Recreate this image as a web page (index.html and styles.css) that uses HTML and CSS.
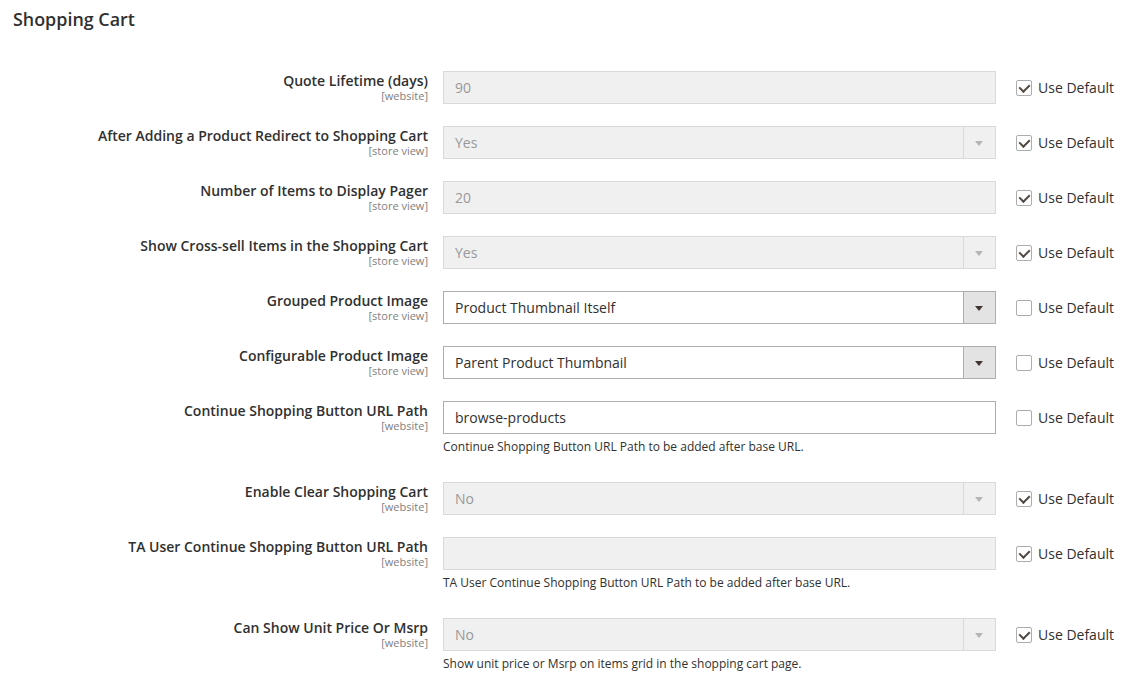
FILE: index.html
```html
<!DOCTYPE html>
<html>
<head>
<meta charset="utf-8">
<link rel="stylesheet" href="styles.css">
</head>
<body>
<div class="section">
  <h2 class="section-title">Shopping Cart</h2>
  <div class="fields">

    <div class="row">
      <div class="label"><span class="name">Quote Lifetime (days)</span><span class="scope">[website]</span></div>
      <div class="control"><div class="input disabled">90</div></div>
      <label class="default"><span class="cb checked"></span>Use Default</label>
    </div>

    <div class="row">
      <div class="label"><span class="name">After Adding a Product Redirect to Shopping Cart</span><span class="scope">[store view]</span></div>
      <div class="control"><div class="input select disabled"><span class="val">Yes</span><span class="arrow"></span></div></div>
      <label class="default"><span class="cb checked"></span>Use Default</label>
    </div>

    <div class="row">
      <div class="label"><span class="name">Number of Items to Display Pager</span><span class="scope">[store view]</span></div>
      <div class="control"><div class="input disabled">20</div></div>
      <label class="default"><span class="cb checked"></span>Use Default</label>
    </div>

    <div class="row">
      <div class="label"><span class="name">Show Cross-sell Items in the Shopping Cart</span><span class="scope">[store view]</span></div>
      <div class="control"><div class="input select disabled"><span class="val">Yes</span><span class="arrow"></span></div></div>
      <label class="default"><span class="cb checked"></span>Use Default</label>
    </div>

    <div class="row">
      <div class="label"><span class="name">Grouped Product Image</span><span class="scope">[store view]</span></div>
      <div class="control"><div class="input select"><span class="val">Product Thumbnail Itself</span><span class="arrow"></span></div></div>
      <label class="default"><span class="cb"></span>Use Default</label>
    </div>

    <div class="row">
      <div class="label"><span class="name">Configurable Product Image</span><span class="scope">[store view]</span></div>
      <div class="control"><div class="input select"><span class="val">Parent Product Thumbnail</span><span class="arrow"></span></div></div>
      <label class="default"><span class="cb"></span>Use Default</label>
    </div>

    <div class="row">
      <div class="label"><span class="name">Continue Shopping Button URL Path</span><span class="scope">[website]</span></div>
      <div class="control"><div class="input">browse-products</div><p class="note">Continue Shopping Button URL Path to be added after base URL.</p></div>
      <label class="default"><span class="cb"></span>Use Default</label>
    </div>

    <div class="row">
      <div class="label"><span class="name">Enable Clear Shopping Cart</span><span class="scope">[website]</span></div>
      <div class="control"><div class="input select disabled"><span class="val">No</span><span class="arrow"></span></div></div>
      <label class="default"><span class="cb checked"></span>Use Default</label>
    </div>

    <div class="row">
      <div class="label"><span class="name">TA User Continue Shopping Button URL Path</span><span class="scope">[website]</span></div>
      <div class="control"><div class="input disabled"></div><p class="note">TA User Continue Shopping Button URL Path to be added after base URL.</p></div>
      <label class="default"><span class="cb checked"></span>Use Default</label>
    </div>

    <div class="row">
      <div class="label"><span class="name">Can Show Unit Price Or Msrp</span><span class="scope">[website]</span></div>
      <div class="control"><div class="input select disabled"><span class="val">No</span><span class="arrow"></span></div><p class="note">Show unit price or Msrp on items grid in the shopping cart page.</p></div>
      <label class="default"><span class="cb checked"></span>Use Default</label>
    </div>

  </div>
</div>
</body>
</html>
```

FILE: styles.css
```css
* { box-sizing: border-box; }
html, body { margin: 0; padding: 0; background: #fff; }
body {
  font-family: "Open Sans", "Noto Sans", sans-serif;
  color: #303030;
  width: 1122px;
  height: 691px;
  overflow: hidden;
}
.section { padding: 7px 0 0 0; }
.section-title {
  margin: 0 0 0 13px;
  font-size: 17.9px;
  font-weight: 600;
  line-height: 24px;
  color: #303030;
}
.fields {
  margin-top: 40px;
  display: flex;
  flex-direction: column;
  gap: 22px;
}
.row {
  display: grid;
  grid-template-columns: 428px 553px auto;
  column-gap: 15px;
  align-items: start;
}
.label {
  display: flex;
  flex-direction: column;
  align-items: flex-end;
  text-align: right;
  padding-top: 1px;
}
.name {
  font-size: 14px;
  font-weight: 600;
  line-height: 18px;
  color: #303030;
}
.scope {
  font-size: 11px;
  line-height: 12px;
  color: #808080;
}
.control { display: flex; flex-direction: column; }
.input {
  height: 33px;
  border: 1px solid #adadad;
  background: #fff;
  font-size: 14px;
  line-height: 31px;
  padding: 0 10px 0 11px;
  color: #303030;
  display: flex;
  align-items: center;
}
.input.disabled {
  background: #f0f0f0;
  border-color: #d9d9d9;
  color: #999;
}
.input.select { padding-right: 0; }
.input.select .val { flex: 1; }
.arrow {
  width: 32px;
  height: 31px;
  border-left: 1px solid #adadad;
  background: #e3e3e3;
  position: relative;
}
.arrow::after {
  content: "";
  position: absolute;
  left: 11px;
  top: 14px;
  border-left: 4px solid transparent;
  border-right: 4px solid transparent;
  border-top: 5px solid #41362f;
}
.disabled .arrow {
  background: #f0f0f0;
  border-left-color: #d9d9d9;
}
.disabled .arrow::after { border-top-color: #b5b5b5; }
.note {
  margin: 5px 0 5px 0;
  font-size: 12px;
  line-height: 16px;
  color: #303030;
}
.default {
  margin-left: 5px;
  height: 33px;
  display: flex;
  align-items: center;
  font-size: 14px;
  color: #303030;
}
.cb {
  width: 16px;
  height: 16px;
  border: 1px solid #adadad;
  border-radius: 2px;
  background: #fff;
  margin-right: 6px;
  position: relative;
  flex: none;
}
.cb.checked::after {
  content: "";
  position: absolute;
  left: 4px;
  top: 1.5px;
  width: 5px;
  height: 8px;
  border-right: 2px solid #514943;
  border-bottom: 2px solid #514943;
  transform: rotate(45deg);
}
```
